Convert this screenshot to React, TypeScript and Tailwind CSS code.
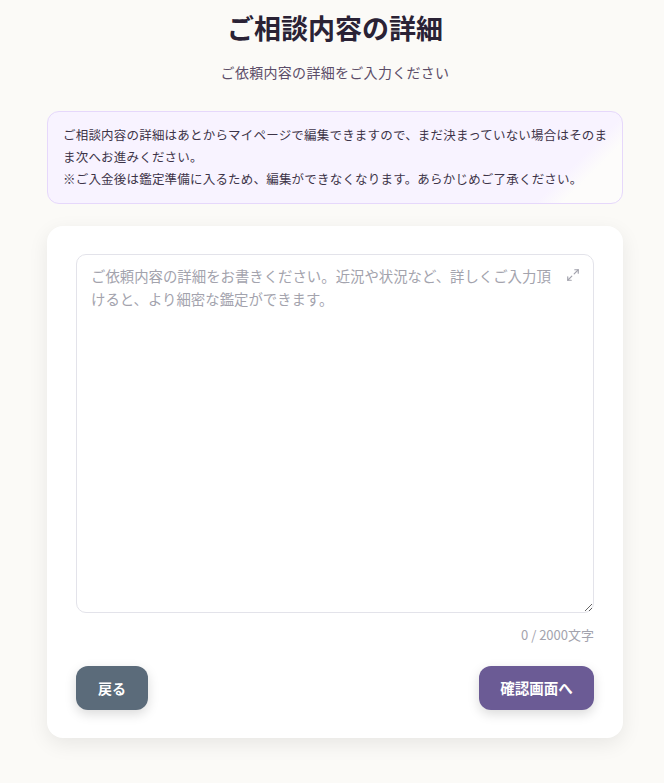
import { Maximize2 } from "lucide-react";

const App = () => {
  return (
    <div
      className="min-h-[783px] bg-[#fbfaf7] pl-[47px] pr-[41px] pt-[10px] pb-[45px]"
      style={{ fontFamily: '"Noto Sans CJK JP", "Noto Sans", sans-serif' }}
    >
      {/* Heading */}
      <div className="text-center">
        <h1 className="text-[27px] leading-[36px] font-bold text-[#2a2235]">ご相談内容の詳細</h1>
        <p className="mt-[16px] text-[14px] leading-[20px] tracking-[0.3px] text-[#5b4d68]">ご依頼内容の詳細をご入力ください</p>
      </div>

      {/* Notice */}
      <div className="mt-[29px] rounded-[12px] border border-[#e6d8fb] bg-[linear-gradient(135deg,#f8f3ff_0%,#f8f3ff_87%,#fdfcfb_91%,#fdfcfb_100%)] pl-[15px] pr-[13px] pt-[12px] pb-[13px] text-[12.5px] leading-[22px] tracking-[0.2px] text-[#3d3448]">
        <p>ご相談内容の詳細はあとからマイページで編集できますので、まだ決まっていない場合はそのまま次へお進みください。</p>
        <p>※ご入金後は鑑定準備に入るため、編集ができなくなります。あらかじめご了承ください。</p>
      </div>

      {/* Form card */}
      <div className="mt-[22px] rounded-[16px] bg-white px-[29px] pt-[28px] pb-[28px] shadow-[0_6px_20px_rgba(0,0,0,0.08)]">
        <div className="relative">
          <textarea
            className="block h-[359px] w-full resize-y rounded-[10px] border border-[#e3e3ea] bg-white py-[9px] pl-[14px] pr-[36px] text-[14.4px] leading-[23px] text-[#333] outline-none placeholder:text-[#a3a3ad]"
            placeholder="ご依頼内容の詳細をお書きください。近況や状況など、詳しくご入力頂けると、より細密な鑑定ができます。"
          />
          <button className="absolute right-[14px] top-[14px] text-[#a3a3ad]">
            <Maximize2 size={14} strokeWidth={2} />
          </button>
        </div>
        <p className="mt-[12px] text-right text-[13px] leading-[20px] text-[#a3a3ad]">0 / 2000文字</p>

        <div className="mt-[21px] flex items-center justify-between">
          <button className="h-[44px] w-[72px] rounded-[12px] bg-[#5b6b7a] text-[14px] font-bold text-white shadow-[0_4px_12px_rgba(0,0,0,0.15)]">
            戻る
          </button>
          <button className="h-[44px] w-[115px] rounded-[12px] bg-[#6b5b95] text-[14.5px] font-bold text-white shadow-[0_4px_12px_rgba(0,0,0,0.15)]">
            確認画面へ
          </button>
        </div>
      </div>
    </div>
  );
};

export default App;
